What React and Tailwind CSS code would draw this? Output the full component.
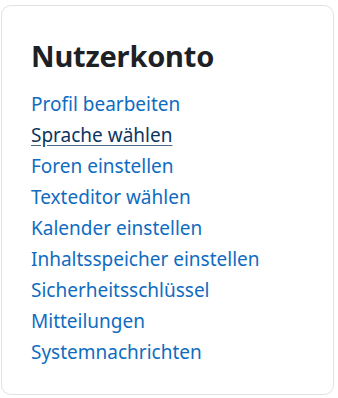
import React from "react";

const links = [
  "Profil bearbeiten",
  "Sprache wählen",
  "Foren einstellen",
  "Texteditor wählen",
  "Kalender einstellen",
  "Inhaltsspeicher einstellen",
  "Sicherheitsschlüssel",
  "Mitteilungen",
  "Systemnachrichten",
];

export default function App() {
  return (
    <div className="w-[338px] h-[398px] bg-white pt-[5px] pl-px" style={{ fontFamily: '"Noto Sans", "Open Sans", sans-serif' }}>
      <div className="w-[333px] h-[390px] border border-[#dee2e6] rounded-[10px] pl-[29px] pt-[30px]">
        <h2 className="text-[29px] font-bold text-[#1d2125] leading-[40px] tracking-[-0.2px]">Nutzerkonto</h2>
        <ul className="mt-[13px] flex flex-col">
          {links.map((l, i) => (
            <li key={l} className="h-[31px] leading-[31px]">
              <a
                href="#"
                className={
                  i === 1
                    ? "text-[19px] text-[#0c355e] underline decoration-[#4a6a8a] underline-offset-[3px]"
                    : "text-[19px] text-[#0f6cbf]"
                }
              >
                {l}
              </a>
            </li>
          ))}
        </ul>
      </div>
    </div>
  );
}
